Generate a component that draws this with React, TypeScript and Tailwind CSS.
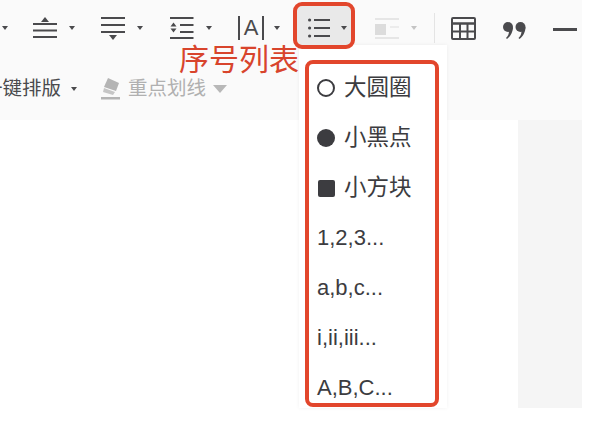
import React from 'react';

const FONT = "font-['Liberation_Sans','Noto_Sans_CJK_SC',sans-serif]";

const Caret = ({ light }: { light?: boolean }) => (
  <svg width="8" height="6" viewBox="0 0 8 6" className={light ? 'text-[#c4c4c4]' : 'text-[#4a4a4d]'}>
    <path d="M1 1h6L4 5z" fill="currentColor" />
  </svg>
);

const AlignTop = () => (
  <svg width="24" height="24" viewBox="0 0 24 24" fill="#4a4a4d">
    <path d="M12 1l4 5H8z" />
    <rect y="7" width="24" height="2" />
    <rect y="13.5" width="24" height="2" />
    <rect y="20" width="24" height="2" />
  </svg>
);

const AlignBottom = () => (
  <svg width="24" height="24" viewBox="0 0 24 24" fill="#4a4a4d">
    <rect y="1" width="24" height="2" />
    <rect y="8" width="24" height="2" />
    <rect y="15" width="24" height="2" />
    <path d="M12 24l-4-5h8z" />
  </svg>
);

const LineHeight = () => (
  <svg width="24" height="24" viewBox="0 0 24 24" fill="#4a4a4d">
    <rect y="1" width="23.5" height="2" />
    <rect x="10" y="8" width="13.5" height="2" />
    <rect x="10" y="15" width="13.5" height="2" />
    <rect y="21" width="23.5" height="2" />
    <path d="M3.5 6.5l3 4h-6zM3.5 16.5l-3-4h6z" />
  </svg>
);

const LetterSpacing = () => (
  <div className="flex h-6 w-[26px] items-center justify-between">
    <div className="h-6 w-[2px] bg-[#4a4a4d]" />
    <span className="text-[22px] leading-none text-[#4a4a4d]">A</span>
    <div className="h-6 w-[2px] bg-[#4a4a4d]" />
  </div>
);

const ListIcon = () => (
  <svg width="22" height="20" viewBox="0 0 22 20" fill="#4a4a4d">
    <circle cx="1.600" cy="2" r="1.600" />
    <circle cx="1.600" cy="10" r="1.600" />
    <circle cx="1.600" cy="18" r="1.600" />
    <rect x="6" y="1" width="16" height="2" />
    <rect x="6" y="9" width="16" height="2" />
    <rect x="6" y="17" width="16" height="2" />
  </svg>
);

const ImageAlign = () => (
  <svg width="24" height="24" viewBox="0 0 24 24">
    <rect y="2" width="24" height="2" fill="#e6e6e6" />
    <rect y="8" width="11" height="11" fill="#dcdcdc" />
    <rect x="15" y="10" width="9" height="2" fill="#ececec" />
    <rect y="21" width="24" height="2" fill="#e6e6e6" />
  </svg>
);

const TableIcon = () => (
  <svg width="25" height="23" viewBox="0 0 25 23" fill="none" stroke="#4a4a4d" strokeWidth="2">
    <rect x="1" y="1" width="23" height="21" rx="1" />
    <path d="M1 6.500h23" strokeWidth="2.500" />
    <path d="M1 14.500h23M9 6.500v15.500M16.500 6.500v15.500" />
  </svg>
);

const QuoteIcon = () => (
  <svg width="23" height="17" viewBox="0 0 23 17" fill="#4a4a4d" className="mt-[4px]">
    <circle cx="5" cy="5" r="5" />
    <path d="M10 5c0 5-2.500 9.500-6 12l-1-1c2-2 3-4 3-7z" />
    <circle cx="17.500" cy="5" r="5" />
    <path d="M22.500 5c0 5-2.500 9.500-6 12l-1-1c2-2 3-4 3-7z" />
  </svg>
);

const Highlighter = () => (
  <svg width="20" height="24" viewBox="0 0 20 24" fill="#b4b4b4">
    <path d="M7 1l11 5-3 8-12-4z" />
    <path d="M3 11l11 4-2 3-10-3z" fill="#c6c6c6" />
    <rect y="20" width="19" height="2.500" />
  </svg>
);

const MENU: { label: string; bullet?: React.ReactNode }[] = [
  { label: '大圆圈', bullet: <div className="h-[18px] w-[18px] rounded-full border-2 border-[#3c3c40]" /> },
  { label: '小黑点', bullet: <div className="h-[18px] w-[18px] rounded-full bg-[#3c3c40]" /> },
  { label: '小方块', bullet: <div className="h-[17px] w-[17px] rounded-[2px] bg-[#3c3c40]" /> },
  { label: '1,2,3...' },
  { label: 'a,b,c...' },
  { label: 'i,ii,iii...' },
  { label: 'A,B,C...' },
];

export default function App() {
  return (
    <div className={`relative h-[430px] w-[592px] overflow-hidden bg-white ${FONT}`}>
      <div className="h-[120px] w-[582px] bg-[#fafafa]">
        <div className="flex h-[56px] items-center pl-[1px]">
          <div className="w-[32px]"><Caret /></div>
          <div className="flex w-[68px] items-center gap-[11px]"><AlignTop /><Caret /></div>
          <div className="flex w-[69px] items-center gap-[11px]"><AlignBottom /><Caret /></div>
          <div className="flex w-[68px] items-center gap-[11px]"><LineHeight /><Caret /></div>
          <div className="flex w-[70px] items-center gap-[9px]"><LetterSpacing /><Caret /></div>
          <div className="relative z-10 flex w-[67px] items-center gap-[10px]"><ListIcon /><Caret /></div>
          <div className="flex w-[59px] items-center gap-[11px]"><ImageAlign /><Caret light /></div>
          <div className="mr-[16px] h-[30px] w-[1px] bg-[#e4e4e4]" />
          <div className="mr-[27px]"><TableIcon /></div>
          <div className="mr-[27px]"><QuoteIcon /></div>
          <div className="mt-[2px] h-[3px] w-6 bg-[#4a4a4d]" />
        </div>
        <div className="ml-[-17px] mt-[19px] flex h-7 items-center">
          <span className="text-[19.5px] leading-none text-[#4a4a4d]">一键排版</span>
          <div className="ml-[9px]"><Caret /></div>
          <div className="ml-[23px]"><Highlighter /></div>
          <span className="ml-[7px] text-[19.5px] leading-none text-[#b0b0b0]">重点划线</span>
          <svg width="14" height="8" viewBox="0 0 14 8" className="ml-[7px]"><path d="M0 0h14L7 8z" fill="#b8b8b8" /></svg>
        </div>
      </div>

      <div className="flex h-[288px] w-[582px] justify-end">
        <div className="h-full w-[64px] bg-[#f5f5f5]" />
      </div>

      <div className="absolute left-[299px] top-[45px] h-[363px] w-[148px] bg-white pl-[6px] pt-[15px] shadow-[0_0_4px_rgba(0,0,0,0.06)]">
        <div className="h-[347px] w-[134px] overflow-hidden rounded-[8px] border-[4px] border-[#e2462c] pl-[8px]">
          <div className="-mt-px">
            {MENU.map((item) => (
              <div key={item.label} className="flex h-[50px] items-center gap-[9px] text-[22px] leading-none text-[#3c3c40]">
                {item.bullet && <div className="flex w-[18px] justify-center">{item.bullet}</div>}
                <span className={item.bullet ? 'text-[22.500px]' : ''}>{item.label}</span>
              </div>
            ))}
          </div>
        </div>
      </div>

      <div className="absolute left-[293px] top-[2px] h-[47px] w-[62px] rounded-[9px] border-[4px] border-[#e2462c] bg-[#e9e9e9]" />

      <span className="absolute left-[179px] top-[45px] text-[30px] leading-none text-[#d8442c]">序号列表</span>
    </div>
  );
}
